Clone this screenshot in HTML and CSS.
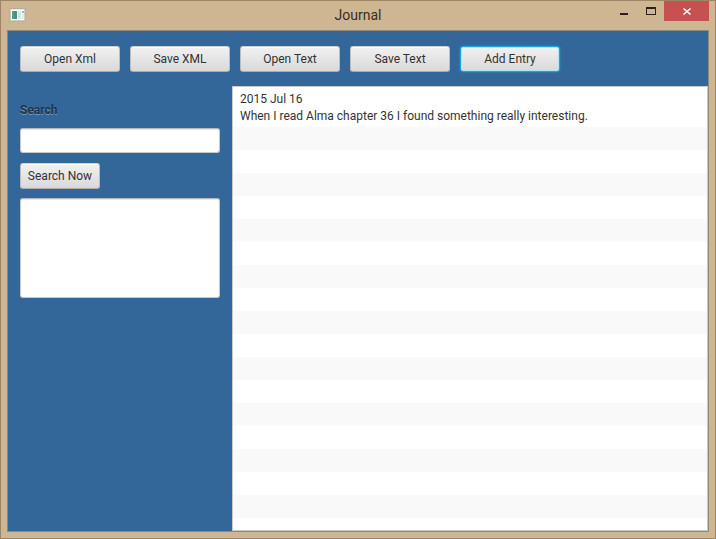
FILE: index.html
```html
<!DOCTYPE html>
<html lang="en">
<head>
<meta charset="utf-8">
<title>Journal</title>
<link rel="stylesheet" href="styles.css">
</head>
<body>
<div class="window">
  <header class="titlebar">
    <svg class="app-icon" width="18" height="14" viewBox="0 0 18 14" aria-hidden="true">
      <rect x="1" y="0.500" width="15" height="12.500" fill="#e9eeec" stroke="#b5ad9c"/>
      <rect x="2" y="2" width="13" height="10" fill="#fff"/>
      <rect x="3" y="3" width="5" height="8" fill="#4b8f8c"/>
      <rect x="3" y="3" width="2" height="8" fill="#5f9f86"/>
      <rect x="9" y="3" width="3" height="8" fill="#d3e3e6"/>
      <rect x="13" y="3" width="2" height="2" fill="#9db4b4"/>
      <rect x="13" y="6" width="2" height="5" fill="#e3e9ec"/>
    </svg>
    <h1 class="title">Journal</h1>
    <div class="controls">
      <button class="control" type="button" aria-label="Minimize">
        <svg width="28" height="20" viewBox="0 0 28 20"><path d="M12 12h8v2h-8z" fill="#2b2119"/></svg>
      </button>
      <button class="control" type="button" aria-label="Maximize">
        <svg width="28" height="20" viewBox="0 0 28 20"><path d="M10 6h10v8H10zM11 8v5h8V8z" fill="#2b2119" fill-rule="evenodd"/></svg>
      </button>
      <button class="control close" type="button" aria-label="Close">
        <svg width="45" height="20" viewBox="0 0 45 20"><path d="M19.500 7.500l7 6M26.500 7.500l-7 6" stroke="#fff" stroke-width="1.600" fill="none"/></svg>
      </button>
    </div>
  </header>
  <main class="content">
    <nav class="toolbar">
      <button class="button" type="button">Open Xml</button>
      <button class="button" type="button">Save XML</button>
      <button class="button" type="button">Open Text</button>
      <button class="button" type="button">Save Text</button>
      <button class="button focused" type="button">Add Entry</button>
    </nav>
    <div class="columns">
      <form class="search">
        <label class="search-label" for="query">Search</label>
        <input class="field" id="query" type="text">
        <button class="button search-button" type="button">Search Now</button>
        <textarea class="field results" aria-label="Search results"></textarea>
      </form>
      <ul class="entries">
        <li class="entry">2015 Jul 16<br>When I read Alma chapter 36 I found something really interesting.</li>
      </ul>
    </div>
  </main>
</div>
</body>
</html>
```
FILE: styles.css
```css
* {
  box-sizing: border-box;
}

body {
  margin: 0;
  font: 12px/17px Roboto, "Open Sans", sans-serif;
  color: #333;
}

.window {
  display: flex;
  flex-direction: column;
  min-height: 100vh;
  padding: 0 6px 6px;
  border: 1px solid #9c8666;
  background: #cdb691;
}

.titlebar {
  display: grid;
  grid-template-columns: 1fr auto 1fr;
  align-items: start;
  height: 29px;
}

.app-icon {
  margin: 7px 0 0 2px;
}

.title {
  margin: 0;
  font-size: 14px;
  font-weight: 400;
  line-height: 29px;
  color: #3a2d20;
}

.controls {
  display: flex;
  justify-content: flex-end;
}

.control {
  padding: 0;
  border: 0;
  background: none;
}

.control svg {
  display: block;
}

.close {
  background: #c75050;
}

.content {
  display: flex;
  flex: 1;
  flex-direction: column;
  border: 1px solid #8f8a78;
  background: #336699;
}

.toolbar {
  display: flex;
  gap: 10px;
  padding: 15px 12px 14px;
}

.button {
  width: 100px;
  height: 26px;
  padding: 0;
  border: 1px solid;
  border-color: #d0d0d0 #bcbcbc #adadad;
  border-radius: 3px;
  background: linear-gradient(#f1f1f1, #d9d9d9);
  box-shadow: inset 0 1px #fafafa;
  font: inherit;
  color: #333;
}

.focused {
  border-color: #16a6dc;
  box-shadow: 0 0 2px #16a6dc, inset 0 0 0 1px #b4e2f2;
}

.columns {
  display: flex;
  flex: 1;
}

.search {
  display: flex;
  flex: none;
  flex-direction: column;
  align-items: flex-start;
  width: 224px;
  padding: 16px 12px;
}

.search-label {
  margin-bottom: 9px;
  font-weight: 700;
  color: #1f3349;
  text-shadow: 0 1px #7799bb;
}

.field {
  width: 100%;
  height: 25px;
  padding: 4px 7px;
  border: 1px solid;
  border-color: #b4b9bf #c8c8c8 #c8c8c8;
  border-radius: 3px;
  background: #fff;
  box-shadow: inset 0 1px 1px #e6e6e6;
  font: inherit;
  color: #333;
}

.search-button {
  width: 80px;
  margin: 10px 0 9px;
}

.results {
  height: 100px;
  resize: none;
}

.entries {
  flex: 1;
  margin: 0;
  padding: 0;
  border: 1px solid #c8c8c8;
  background: repeating-linear-gradient(#f9f9f9 0 23px, #fff 23px 46px) 0 40px no-repeat #fff;
  list-style: none;
}

.entry {
  height: 40px;
  padding: 4px 7px;
}
```
